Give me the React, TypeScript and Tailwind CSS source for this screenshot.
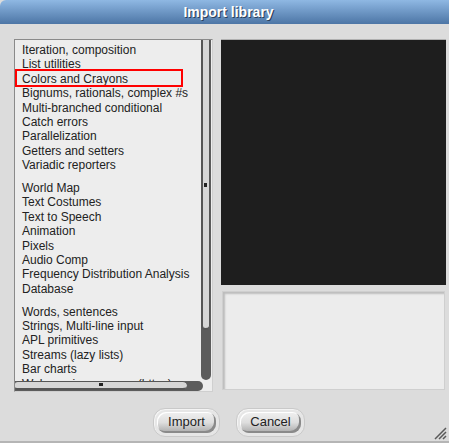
import React from "react";

const group1 = [
  "Iteration, composition",
  "List utilities",
  "Colors and Crayons",
  "Bignums, rationals, complex #s",
  "Multi-branched conditional",
  "Catch errors",
  "Parallelization",
  "Getters and setters",
  "Variadic reporters",
];
const group2 = [
  "World Map",
  "Text Costumes",
  "Text to Speech",
  "Animation",
  "Pixels",
  "Audio Comp",
  "Frequency Distribution Analysis",
  "Database",
];
const group3 = [
  "Words, sentences",
  "Strings, Multi-line input",
  "APL primitives",
  "Streams (lazy lists)",
  "Bar charts",
  "Web services access (https)",
];

function Item({ label, hl }: { label: string; hl?: boolean }) {
  return (
    <div className="relative h-[14.4px] leading-[14.4px] whitespace-nowrap pl-[7px]">
      {hl && (
        <div className="absolute left-0 top-[-3px] w-[168px] h-[18px] border-2 border-[#ff0000]" />
      )}
      {label}
    </div>
  );
}

function Btn({ label, w }: { label: string; w: number }) {
  return (
    <div
      className="h-[29px] rounded-[12px] bg-[#e6e6e6] border border-[#c9c9c9] p-[3px] shadow-[inset_1px_1px_0_#f4f4f4]"
      style={{ width: w }}
    >
      <div className="h-full w-full rounded-[9px] bg-gradient-to-b from-[#f0f0f0] via-[#dedede] to-[#a9a9a9] shadow-[inset_-2px_-2px_0_#8a8a8a,inset_1px_1px_0_#ffffff] flex items-center justify-center text-[13px] text-[#222] pb-[1px]">
        {label}
      </div>
    </div>
  );
}

export default function App() {
  return (
    <div
      className="w-[449px] h-[443px] bg-[#dcdcdc] flex flex-col overflow-hidden relative"
      style={{ fontFamily: '"Liberation Sans", Arial, sans-serif' }}
    >
      <div className="h-[24px] shrink-0 bg-gradient-to-b from-[#8fb8e3] to-[#4d76a6] flex items-center justify-center rounded-tl-[6px]">
        <span className="text-white font-bold text-[14px] pl-[8px] [text-shadow:1px_1px_0_#2b3f5a]">
          Import library
        </span>
      </div>
      <div className="flex pl-[14px] pt-[15px] gap-[8px]">
        <div className="relative w-[199px] h-[353px] bg-[#ededed] border border-[#8a8a8a] border-r-[#cfcfcf] border-b-[#cfcfcf] overflow-hidden text-[12px] text-[#222]">
          <div className="pt-[3px]">
            {group1.map((t) => (
              <Item key={t} label={t} hl={t === "Colors and Crayons"} />
            ))}
            <div className="h-[8.5px]" />
            {group2.map((t) => (
              <Item key={t} label={t} />
            ))}
            <div className="h-[8.5px]" />
            {group3.map((t) => (
              <Item key={t} label={t} />
            ))}
          </div>
          {/* vertical scrollbar */}
          <div className="absolute right-[1px] top-0 w-[10px] h-[340px] rounded-b-[5px] bg-[#5c5c5c]">
            <div className="absolute left-0 top-0 w-[9px] h-[290px] rounded-b-[5px] bg-[#d6d6d6] border-l-2 border-r border-b-2 border-[#555]">
              <div className="absolute left-[1px] top-[143px] w-[3px] h-[4px] bg-[#222]" />
            </div>
          </div>
          {/* horizontal scrollbar */}
          <div className="absolute left-0 top-[341px] w-[188px] h-[10px] rounded-r-[5px] bg-[#5c5c5c]">
            <div className="absolute left-0 top-0 w-[172px] h-[9px] rounded-r-[5px] rounded-l-[3px] bg-[#d6d6d6] border-t border-b-2 border-[#555]">
              <div className="absolute left-[84px] top-[1px] w-[4px] h-[3px] bg-[#222]" />
            </div>
          </div>
        </div>
        <div className="w-[225px] flex flex-col gap-[6px]">
          <div className="h-[246px] bg-[#1e1e1e] border-t border-[#b0b0b0]" />
          <div className="h-[99px] mx-[1px] bg-[#ececec] border border-[#cfcfcf] shadow-[inset_2px_2px_2px_#bdbdbd]" />
        </div>
      </div>
      <div className="flex gap-[16px] pl-[153px] pt-[16px]">
        <Btn label="Import" w={67} />
        <Btn label="Cancel" w={69} />
      </div>
      <div className="absolute left-0 right-0 bottom-0 h-[2px] bg-[#b5b5b5]" />
      <svg className="absolute right-[2px] bottom-[3px]" width="14" height="14" viewBox="0 0 14 14">
        <path d="M13 2 L2 13 M13 6 L6 13 M13 10 L10 13" stroke="#5a5a5a" strokeWidth="1.5" />
      </svg>
    </div>
  );
}
